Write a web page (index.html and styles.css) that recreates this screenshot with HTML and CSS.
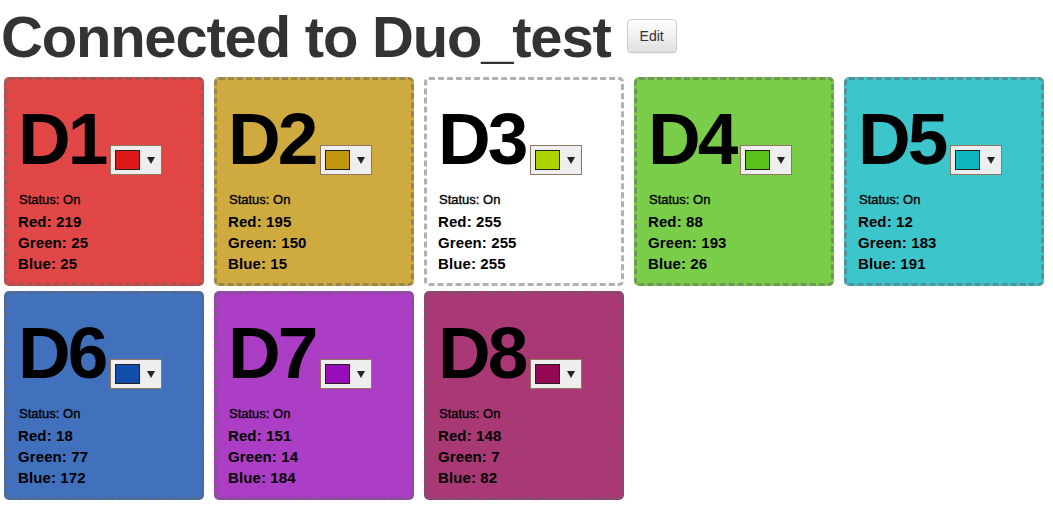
FILE: index.html
```html
<!DOCTYPE html>
<html>
<head>
<meta charset="utf-8">
<link rel="stylesheet" href="styles.css">
</head>
<body>
<div class="header">
  <h1 class="title">Connected to Duo_test</h1>
  <button class="btn">Edit</button>
</div>
<div class="grid">
  <div class="card" style="background:rgb(226,71,71)">
    <div class="name">D1<span class="picker"><span class="swatch" style="background:#db1919"></span><span class="dd"></span></span></div>
    <div class="status">Status: On</div>
    <div class="val">Red: 219</div><div class="val">Green: 25</div><div class="val">Blue: 25</div>
  </div>
  <div class="card" style="background:rgb(207,171,63)">
    <div class="name">D2<span class="picker"><span class="swatch" style="background:#c3960f"></span><span class="dd"></span></span></div>
    <div class="status">Status: On</div>
    <div class="val">Red: 195</div><div class="val">Green: 150</div><div class="val">Blue: 15</div>
  </div>
  <div class="card" style="background:#ffffff">
    <div class="name">D3<span class="picker"><span class="swatch" style="background:#aed400"></span><span class="dd"></span></span></div>
    <div class="status">Status: On</div>
    <div class="val">Red: 255</div><div class="val">Green: 255</div><div class="val">Blue: 255</div>
  </div>
  <div class="card" style="background:rgb(121,205,72)">
    <div class="name">D4<span class="picker"><span class="swatch" style="background:#58c11a"></span><span class="dd"></span></span></div>
    <div class="status">Status: On</div>
    <div class="val">Red: 88</div><div class="val">Green: 193</div><div class="val">Blue: 26</div>
  </div>
  <div class="card" style="background:rgb(61,197,204)">
    <div class="name">D5<span class="picker"><span class="swatch" style="background:#0cb7bf"></span><span class="dd"></span></span></div>
    <div class="status">Status: On</div>
    <div class="val">Red: 12</div><div class="val">Green: 183</div><div class="val">Blue: 191</div>
  </div>
  <div class="card" style="background:rgb(65,113,189)">
    <div class="name">D6<span class="picker"><span class="swatch" style="background:#124dac"></span><span class="dd"></span></span></div>
    <div class="status">Status: On</div>
    <div class="val">Red: 18</div><div class="val">Green: 77</div><div class="val">Blue: 172</div>
  </div>
  <div class="card" style="background:rgb(172,62,198)">
    <div class="name">D7<span class="picker"><span class="swatch" style="background:#970eb8"></span><span class="dd"></span></span></div>
    <div class="status">Status: On</div>
    <div class="val">Red: 151</div><div class="val">Green: 14</div><div class="val">Blue: 184</div>
  </div>
  <div class="card" style="background:rgb(169,57,117)">
    <div class="name">D8<span class="picker"><span class="swatch" style="background:#940752"></span><span class="dd"></span></span></div>
    <div class="status">Status: On</div>
    <div class="val">Red: 148</div><div class="val">Green: 7</div><div class="val">Blue: 82</div>
  </div>
</div>
</body>
</html>
```

FILE: styles.css
```css
html, body {
  margin: 0;
  padding: 0;
  background: #fff;
  font-family: "Liberation Sans", Arial, sans-serif;
  color: #000;
}

.header {
  display: flex;
  align-items: center;
  height: 73px;
}

.title {
  margin: 0 0 0 1px;
  font-size: 58px;
  font-weight: bold;
  color: #333;
  line-height: 1.1;
  letter-spacing: -1.2px;
}

.btn {
  margin-left: 16px;
  margin-top: -2px;
  font-family: "Liberation Sans", Arial, sans-serif;
  font-size: 14px;
  line-height: 20px;
  padding: 6px 12px;
  color: #333;
  background: linear-gradient(to bottom, #fff 0, #e0e0e0 100%);
  border: 1px solid #ccc;
  border-radius: 4px;
  box-shadow: inset 0 1px 0 rgba(255,255,255,.15), 0 1px 1px rgba(0,0,0,.075);
}

.grid {
  display: flex;
  flex-wrap: wrap;
  column-gap: 10px;
  row-gap: 5px;
  padding: 4px 4px 0 4px;
}

.card {
  box-sizing: border-box;
  width: 200px;
  height: 209px;
  border: 3px dashed rgba(100, 100, 100, 0.5);
  border-radius: 5px;
  padding: 22px 10px 0 11px;
}

.name {
  font-size: 73px;
  font-weight: bold;
  line-height: 74px;
  height: 74px;
  white-space: nowrap;
  letter-spacing: -3px;
}

.picker {
  display: inline-flex;
  align-items: center;
  box-sizing: border-box;
  width: 52px;
  height: 30px;
  padding: 0 4px;
  margin-left: 5px;
  border: 1px solid #91765d;
  background: #eee;
  vertical-align: -6px;
  letter-spacing: 0;
}

.swatch {
  display: block;
  box-sizing: border-box;
  width: 25px;
  height: 20px;
  border: 1px solid #222;
}

.dd {
  display: block;
  width: 0;
  height: 0;
  margin-left: 7px;
  margin-top: 1px;
  border-left: 4px solid transparent;
  border-right: 4px solid transparent;
  border-top: 7px solid #222;
}

.status {
  margin-top: 14px;
  font-size: 13px;
  line-height: 20px;
  padding-left: 1px;
  -webkit-text-stroke: 0.35px #000;
}

.val {
  font-size: 15px;
  font-weight: bold;
  line-height: 21px;
  letter-spacing: 0.1px;
}

.status + .val {
  margin-top: 1px;
}
```
